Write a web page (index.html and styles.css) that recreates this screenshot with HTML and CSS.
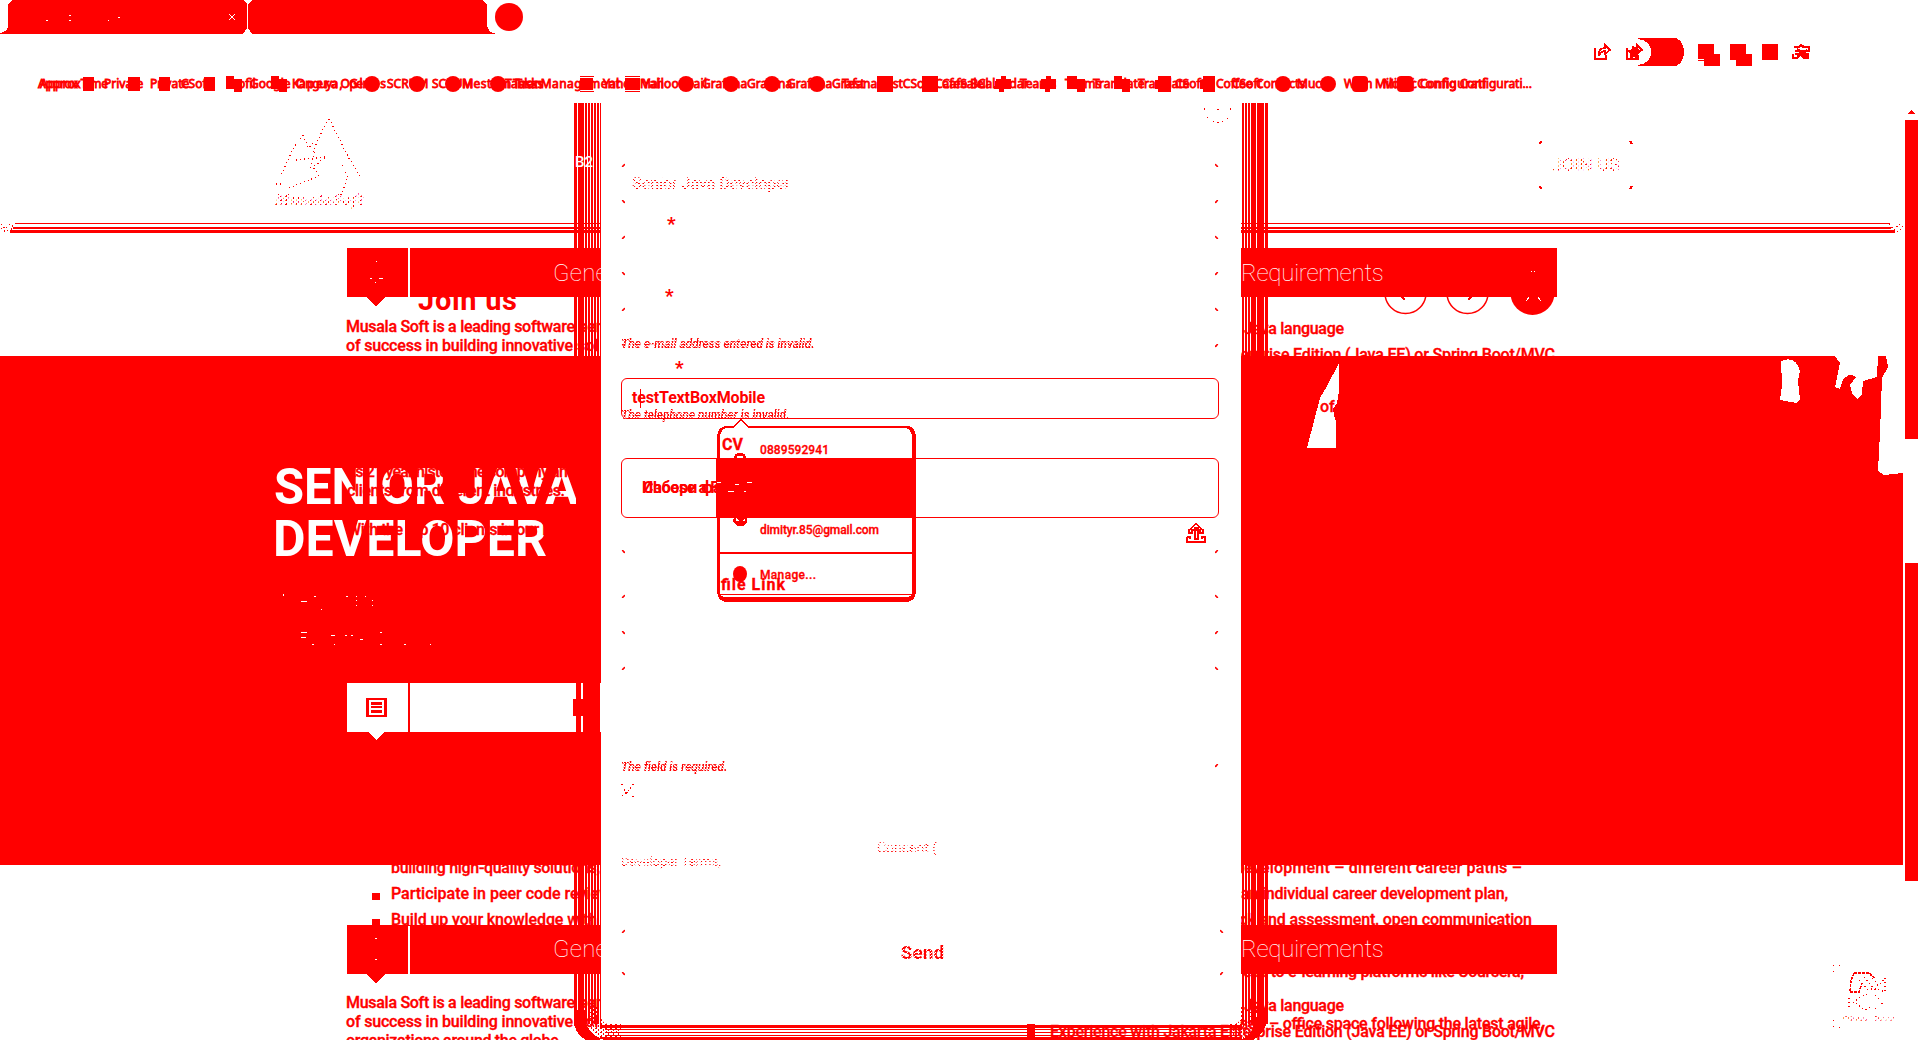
FILE: index.html
```html
<!DOCTYPE html>
<html lang="en">
<head>
<meta charset="utf-8">
<title>Senior Java Developer</title>
<link rel="stylesheet" href="styles.css">
</head>
<body>
<header class="chrome">
<svg width="1920" height="103" viewBox="0 0 1920 103">
  <path d="M12 0H244L247 4V28L243 34H0V33Q8 32 8 25V5ZM252 0H483L487 5V25Q488 33 495 33V34H252L248 28V4Z"/>
  <ellipse cx="509" cy="17" rx="14" ry="14"/>
  <path class="paper" d="M46 20h2v1h-2zM69 15h2v1h-2zM69 20h2v1h-2zM108 20h1v1h-1zM118 17h2v1h-2z"/>
  <path class="cross" d="M229 14l6 6M235 14l-6 6"/>
  <g class="tools">
    <path class="line" d="M1595 48v11h11v-4M1599 56v-4q1-4 6-4v-3l5 5-5 4v-3q-4 0-6 5"/>
    <path class="line" d="M1627 48v11h11v-4M1631 56v-4q1-4 6-4v-3l5 5-5 4v-3q-4 0-6 5"/>
    <path d="M1627 50l4 0 2-5 3 4 5 1-3 4 0 5-4-2-4 2v-5z"/>
    <path d="M1638 38h36a10 14 0 0 1 0 28h-36v-1q13-2 13-13t-13-13z"/>
    <path d="M1698 44h16v10h6v12h-16v-5h-6v-1h6v-1h-6zM1730 44h16v10h6v12h-16v-6h-6zM1762 44h16v16h-16z"/>
    <path class="line wide" d="M1794 47h5l2-2 3 2h5v4h-14m0 3h13v4h-4l-4-4-3 4h-4v-4M1797 49l10 8m0-7l-10 7"/>
  </g>
  <g class="icons">
    <path d="M83 77h11v14h-11zM128 77h12v14h-12zM159 77h11v14h-11zM204 77h11v14h-11zM226 76h8v3h8v13h-8v-3h-8zM271 76h8v3h8v13h-8v-3h-8zM580 78h13v12h-13zM580 76h14v1h-14zM580 91h14v1h-14zM625 78h15v12h-15zM625 76h15v1h-15zM625 91h15v1h-15zM877 76h16v16h-16zM922 76h16v16h-16zM996 79h5v-3h5v3h5v10h-7v3h-5v-3h-5zM1041 79h5v-3h5v3h5v10h-6v3h-5v-3h-5zM1067 76h10v3h8v13h-8v-3h-10zM1114 76h8v3h8v13h-8v-3h-8zM1158 76h13v16h-13v-3h-3v-9h3zM1203 76h12v16h-12v-3h-3v-9h3z"/>
    <circle cx="372" cy="84" r="8"/><circle cx="417" cy="84" r="8"/><circle cx="453" cy="84" r="8"/><circle cx="498" cy="84" r="8"/><circle cx="686" cy="84" r="8"/><circle cx="731" cy="84" r="8"/><circle cx="772" cy="84" r="8"/><circle cx="817" cy="84" r="8"/><circle cx="1283" cy="84" r="8"/><circle cx="1328" cy="84" r="8"/><rect x="1352" y="76" width="16" height="16" rx="4"/><rect x="1397" y="76" width="16" height="16" rx="4"/>
  </g>
  <g class="bookmarks">
    <text x="38" y="88" textLength="70">Approx Time</text><text x="40" y="88">Approx</text><text x="104" y="88">Private</text><text x="150" y="88">Private</text><text x="181" y="88">CSoft</text><text x="226" y="88">Profil</text><text x="250" y="88">Google</text><text x="292" y="88" textLength="78">Kanguya Open</text><text x="296" y="88" textLength="90">Opera, Glass</text><text x="387" y="88">SCRUM</text><text x="432" y="88">SCRUM</text><text x="462" y="88" textLength="80">Mestum Tran</text><text x="505" y="88" textLength="115">Tasks Management</text><text x="513" y="88">Tasks</text><text x="603" y="88">Yahoo</text><text x="640" y="88">Mail</text><text x="643" y="88" textLength="64">Yahoo Mail</text><text x="702" y="88">Grafana</text><text x="747" y="88">Grafana</text><text x="787" y="88">Grafana</text><text x="832" y="88">Grafana</text><text x="842" y="88">Test</text><text x="886" y="88">estCSoft</text><text x="935" y="88">CafeSale</text><text x="942" y="88">Cafe Bul</text><text x="978" y="88">Calendar</text><text x="1020" y="88">Teams</text><text x="1065" y="88">Teams</text><text x="1093" y="88">Translate</text><text x="1138" y="88">Translate</text><text x="1175" y="88">CSoft</text><text x="1216" y="88">Coffee</text><text x="1232" y="88">CSoft</text><text x="1256" y="88">Contacts</text><text x="1297" y="88">Muc</text><text x="1344" y="88">Wiim</text><text x="1375" y="88">Milo</text><text x="1383" y="88">Miboj</text><text x="1411" y="88" textLength="75">cConfigurati</text><text x="1420" y="88" textLength="112">Config Configurati...</text>
  </g>
</svg>
</header>

<main class="page">
<svg class="scene" viewBox="0 103 1920 937" width="1920" height="937">
  <defs>
    <pattern id="speck" width="5" height="4" patternUnits="userSpaceOnUse"><path d="M0 0h2v1h-2zM3 1h1v2h-1zM1 3h1v1h-1z"/></pattern>
    <pattern id="bars" width="3" height="8" x="585" patternUnits="userSpaceOnUse"><path d="M0 0h2v8h-2z"/></pattern>
    <pattern id="rows" width="8" height="3" y="1028" patternUnits="userSpaceOnUse"><path d="M0 1h8v1h-8z"/></pattern>
    <pattern id="white" width="4" height="4" patternUnits="userSpaceOnUse"><path class="paper" d="M0 0h3v2h-3zM2 2h2v2h-2z"/></pattern>
    <clipPath id="above"><path d="M0 297H1920V356H0z"/></clipPath>
    <clipPath id="below"><path d="M0 865H1920V925H0z"/></clipPath>
    <clipPath id="foot"><path d="M0 974H1920V1040H0z"/></clipPath>
  </defs>

  <!-- brand -->
  <path class="dots" d="M329 119l-7 12-7 16-5 24M329 119l8 15 9 19 14 24M303 135l-10 14-12 27M303 135l5 13 8-7M296 160l30-3-13 10 6 9M289 188l30-12M342 165l6 12-7 18M276 184l6 0"/>
  <text class="brand" x="275" y="205" textLength="88" fill="url(#speck)">MusalaSoft</text>

  <!-- header edge -->
  <path d="M15 223H1890v1H15zM13 227H1891v2H13zM10 230H1895v3H10z"/>
  <path class="dots" d="M1 224l4 5 5-5 4 3M1 228l5 4 7-4M1889 224l5 6 5-6 4 2-4 6-7-1"/>

  <!-- dialog shadow -->
  <path d="M574 103h3v921h-3zM578 103h6v921h-6zM1251 103h4v921h-4zM1258 103h6v921h-6zM1265 103h3v921h-3z"/>
  <path fill="url(#bars)" d="M585 103h16v921h-16zM1242 103h17v921h-17z"/>
  <path d="M574 1010v14q3 12 12 16h18q-16-6-19-20v-10zM1257 1010q0 22-16 30h12q15-8 15-28v-2zM600 1025h642v3H600zM600 1037h642v3H600z"/>
  <path fill="url(#rows)" d="M605 1028h637v9H605z"/>
  <path fill="url(#speck)" d="M585 1005h16q0 19 20 19v16h-16q-20-8-20-35zM1241 1005h16q0 20-10 35h-18v-16q12 0 12-19z"/>
  <text class="small-white" x="575" y="167">B2</text>

  <!-- introduction under the header -->
  <g clip-path="url(#above)">
    <text class="join" x="418" y="310" textLength="99">Join us</text>
    <text x="346" y="332" textLength="229">Musala Soft is a leading software</text><text x="579" y="332">ser</text>
    <text x="346" y="351" textLength="227">of success in building innovative</text><text x="577" y="351">sol</text>
    <text x="1244" y="334" textLength="100">Java language</text>
    <text x="1218" y="360" textLength="337">Enterprise Edition (Java EE) or Spring Boot/MVC</text>
    <circle class="line" cx="1405.500" cy="293" r="20.500"/><circle class="line" cx="1467.500" cy="293" r="20.500"/>
    <path class="line wide" d="M1397 292l8 8M1476 292l-8 8"/>
    <circle cx="1532.500" cy="293" r="22"/><path class="cross" d="M1526 301l4-5M1541 301l-4-5"/>
  </g>
  <path d="M347 248h254v49H386l-10 9-10-9h-19zM1241 248h316v49h-316z"/>
  <path class="paper" d="M408 248h2v49h-2zM376 261h1v1h-1zM370 278h2v1h-2zM379 278h4v1h-4zM375 282h1v1h-1zM1531 271h1v1h-1zM1534 271h1v1h-1z"/>
  <text class="bar-title" x="553" y="281">General</text><text class="bar-title" x="1241" y="281" textLength="143">Requirements</text>

  <!-- hero -->
  <path d="M0 356h601v509H0zM1241 356h662v509h-662z"/>
  <path class="paper" d="M1339 363v28l-2 12-4 6 1 6 2 7v26h-29l13-50 7-12zM1781 361q15-6 19 10l-2 10 2 18-3 4-17-3 2-15zM1835 356l5 7-2 10-3 14 5 2 3-9q6-8 13-3l-6 8 2 8 5 6 5-5 1-13 14-4 1-21zM1886 356l2 11-6 11-2 55-2 38 6 4 19-2V356z"/>
  <text class="hero" x="274" y="504" textLength="304" lengthAdjust="spacingAndGlyphs">SENIOR JAVA</text>
  <text class="hero" x="273" y="556" textLength="274" lengthAdjust="spacingAndGlyphs">DEVELOPER</text>
  <path d="M576 470h25v36h-25z"/>
  <text x="347" y="477" textLength="229">Its 21 year history, the company and</text>
  <text x="347" y="496" textLength="218">clients from different industries.</text>
  <text x="347" y="535" textLength="225">With the top 10 clients in our long</text>
  <text x="1320" y="412">of</text>
  <path class="paper" d="M283 594h1v2h-1zM301 601h6v1h-6zM314 596h2v1h-2zM321 609h1v1h-1zM346 596h2v1h-2zM356 596h1v1h-1zM365 596h1v1h-1zM356 600h1v1h-1zM356 605h1v1h-1zM372 600h1v1h-1zM372 605h1v1h-1zM301 632h6v1h-6zM301 637h5v1h-5zM331 635h4v1h-4zM345 635h2v1h-2zM351 635h2v1h-2zM380 632h2v1h-2zM360 639h3v1h-3zM312 644h2v1h-2zM334 644h1v1h-1zM380 644h2v1h-2zM404 644h2v1h-2zM430 644h1v1h-1z"/>
  <path class="paper" d="M347 683h254v49H384l-8 8-8-8h-21z"/>
  <path d="M408 683h2v49h-2zM576 683h5v49h-5zM583 683h17v49h-17zM573 699h10v17h-10zM366 698h21v19h-21z"/>
  <path class="paper" d="M369 700h15v15h-15z"/><path d="M371 702h11v3h-11zM371 706h11v2h-11zM371 710h11v3h-11z"/>

  <!-- content between panels -->
  <g clip-path="url(#below)">
    <text x="391" y="873" textLength="209">building high-quality solutions,</text>
    <text x="391" y="899" textLength="220">Participate in peer code review</text>
    <text x="391" y="925" textLength="206">Build up your knowledge with</text>
    <path d="M372 893h8v7h-8zM372 919h8v6h-8z"/>
    <text x="1235" y="873" textLength="287">development – different career paths –</text>
    <text x="1241" y="899" textLength="267">an individual career development plan,</text>
    <text x="1239" y="925" textLength="293">ck and assessment, open communication</text>
  </g>
  <path d="M347 925h254v49H386l-10 9-10-9h-19zM1241 925h316v49h-316z"/>
  <path class="paper" d="M408 926h2v48h-2zM375 938h2v1h-2zM375 959h2v1h-2z"/>
  <text class="bar-title" x="553" y="957">General</text><text class="bar-title" x="1241" y="957" textLength="143">Requirements</text>
  <g clip-path="url(#foot)">
    <text x="1243" y="977" textLength="281">ess to e-learning platforms like Coursera,</text>
    <text x="346" y="1008" textLength="229">Musala Soft is a leading software</text><text x="579" y="1008">ser</text>
    <text x="346" y="1027" textLength="227">of success in building innovative</text><text x="577" y="1027">sol</text>
    <text x="346" y="1046" textLength="217">organizations around the globe.</text>
    <text x="1244" y="1011" textLength="100">Java language</text>
    <text x="1240" y="1029" textLength="304">sed – office space following the latest agile,</text>
    <text x="1050" y="1037" textLength="505">Experience with Jakarta Enterprise Edition (Java EE) or Spring Boot/MVC</text>
    <path d="M1027 1024h8v16h-8z"/>
  </g>

  <!-- join button, scrollbar and privacy badge -->
  <path class="corner" d="M1539.500 144l2-3M1632 144l-2-3M1539.500 186l2 3M1632 186l-2 3"/>
  <text class="button-text" x="1552" y="171" textLength="68" fill="url(#speck)">JOIN US</text>
  <path d="M1911 110l4 4h-7zM1905 120h13v319h-13zM1905 563h13v318h-13z"/>
  <path class="line" stroke-dasharray="3 1" d="M1854 973h16l5 6M1854 973l-3 8-1 11h9l3-9"/>
  <path class="dots" d="M1862 983l6 7 8-2 9 4V978l-6 7M1864 977l12 14M1859 980l8 8M1870 975l9 12M1849 998v12M1853 1003l6-5 8-4M1856 1003l9 7 8-4M1875 995l8 8-8 6"/>
  <path d="M1833 965h1v1h-1zM1839 965h1v1h-1zM1833 971h1v1h-1zM1833 1020h1v1h-1zM1833 1026h1v1h-1zM1839 1027h1v1h-1z"/>
  <text class="privacy" x="1843" y="1021" textLength="52" fill="url(#speck)">Privacy · Terms</text>
</svg>

<form class="dialog">
  <svg class="close" width="28" height="16" viewBox="0 0 28 16"><path d="M1 1v2M14 2h2M27 1v2M4 10l1 1M10 14h1M14 15h2M19 14h1M24 11h1"/></svg>
  <div class="field first"><span class="value speckled">Senior Java Developer</span></div>
  <div class="mark">*</div>
  <div class="field"></div>
  <div class="mark second">*</div>
  <div class="field"><em class="error">The e-mail address entered is invalid.</em></div>
  <div class="mark third">*</div>
  <div class="field phone"><span class="value">testTextBoxMobile</span><i class="caret"></i><em class="error">The telephone number is invalid.</em></div>
  <div class="field upload"><span class="file">Избери файл</span><span class="file over">Choose a File...</span></div>
  <div class="field tail">
    <svg class="send-icon" width="20" height="20" viewBox="0 0 20 20"><path d="M10 1L3 7v3h3V7h8v3h3V7zM1 14v5h18v-5h-3v2M1 14h3v2M9 5h3v11H9z"/></svg>
  </div>
  <div class="field link"></div>
  <div class="field message"><em class="error">The field is required.</em></div>
  <div class="check"><svg width="14" height="14" viewBox="0 0 14 14"><path d="M0 1h2M11 1h2M1 12h1M11 13h2M3 6l2 5 5-7"/></svg></div>
  <div class="consent speckled">Consent (</div>
  <div class="terms speckled">Developer Terms,</div>
  <div class="field submit"><span class="speckled">Send</span></div>
</form>

<svg class="popup" width="200" height="184" viewBox="716 419 200 184">
  <path d="M727 426h6l8-7 8 7h158q8 0 9 10v156q-1 10-10 10H727q-9 0-10-10V436q1-10 10-10z"/>
  <path class="paper" d="M728 428h6l7-8 7 8h156q8 0 8 10v154q0 5-6 5H726q-6 0-6-6V438q0-10 8-10z"/>
  <path d="M716 458h200v60H716zM719 552h194v2H719zM719 594h194v1H719z"/>
  <path class="paper" d="M717 482h4v1h-4zM728 491h6v1h-6zM735 484h4v1h-4zM747 482h5v1h-5zM744 491h2v1h-2z"/>
  <path d="M734 458q0-5 6-5t6 5zM734 518h13v4l-4 4h-6l-4-5z"/>
  <path class="paper" d="M737 456h6v2h-6zM736 518l3 3h-3zM745 518l-3 3h3z"/>
  <ellipse cx="740" cy="574" rx="7" ry="8"/>
  <text class="strong" x="722" y="450">CV</text><text class="strong" x="721" y="590" textLength="64">file Link</text>
  <text x="760" y="454" textLength="69">0889592941</text><text x="760" y="534" textLength="119">dimityr.85@gmail.com</text><text x="760" y="579" textLength="56">Manage...</text>
</svg>
</main>
</body>
</html>
```
FILE: styles.css
```css
* { box-sizing: border-box; }
body { margin: 0; width: 1920px; height: 1040px; overflow: hidden; background: #fff; color: #f00; font-family: Roboto, sans-serif; font-size: 16px; }
svg { display: block; fill: #f00; }
.chrome { height: 103px; }
.page { position: relative; height: 937px; }
path { shape-rendering: crispEdges; }
.paper { fill: #fff; }
.line { fill: none; stroke: #f00; stroke-width: 1.5; }
.wide { stroke-width: 2.5; }
.cross { fill: none; stroke: #fff; stroke-width: 1; }
.dots { fill: none; stroke: #f00; stroke-width: 1.3; stroke-dasharray: 1 3; }
.corner { fill: none; stroke: #f00; stroke-width: 2; }
.bookmarks { font: 12px "Noto Sans", sans-serif; stroke: #f00; stroke-width: .8; }
.scene { font: 500 16px Roboto, sans-serif; }
.scene text:not([class]) { stroke: #f00; stroke-width: .35; }
.brand { font: italic 700 17px "Liberation Serif", serif; }
.join { font: 700 29px Roboto, sans-serif; }
.hero { font: 700 50.6px Roboto, sans-serif; fill: #fff; }
.bar-title { font: 100 24px Roboto, sans-serif; fill: #fff; letter-spacing: .3px; }
.small-white { font: 500 15px Roboto, sans-serif; fill: #fff; }
.button-text { font: 400 18px Roboto, sans-serif; }
.privacy { font: 8px Roboto, sans-serif; }

.dialog { position: absolute; left: 601px; top: 0; width: 640px; height: 921px; padding: 60px 22px 0 20px; background: #fff; border-radius: 0 0 8px 8px; }
.close { position: absolute; left: 602px; top: 4px; }
.close path, .check path, .send-icon path { fill: none; stroke: #f00; stroke-width: 1; }
.check path { stroke-dasharray: 2 1; }
.send-icon path { stroke-width: 1.5; }
.field { position: relative; height: 41px; display: flex; align-items: center; padding-left: 11px; }
.field::before { content: ""; position: absolute; inset: 0; border: 2px solid #f00; border-radius: 6px; mask: linear-gradient(#000 0 0) 0 0 / 4px 4px, linear-gradient(#000 0 0) 100% 0 / 4px 4px, linear-gradient(#000 0 0) 0 100% / 4px 4px, linear-gradient(#000 0 0) 100% 100% / 4px 4px; mask-repeat: no-repeat; }
.phone::before, .upload::before { border-width: 1px; mask: none; }
.mark { height: 31px; padding: 8px 0 0 46px; font: 700 19px/24px Roboto, sans-serif; }
.second { padding-left: 44px; }
.third { height: 30px; padding-left: 54px; }
.value { font-weight: 700; letter-spacing: -.15px; margin-top: -2px; }
.first .value { font-weight: 500; letter-spacing: -.05px; margin-top: 0; }
.speckled { color: transparent; background: repeating-conic-gradient(#f00 0 25%, #fff 0 50%) 0 0 / 4px 3px; background-clip: text; }
.error { position: absolute; left: 0; bottom: -3px; font: italic 700 12px/14px Roboto, sans-serif; letter-spacing: -.08px; color: transparent; background: repeating-conic-gradient(#f00 0 33%, #fff 0 50%) 0 0 / 3px 3px; background-clip: text; }
.field.phone { height: 41px; }
.caret { position: absolute; left: 19px; top: 11px; width: 1px; height: 19px; background: #f00; }
.upload { height: 60px; margin-top: 39px; padding-left: 21px; }
.file { font-weight: 700; margin-top: -2px; }
.over { position: absolute; left: 22px; letter-spacing: -.4px; }
.tail { height: 36px; }
.tail::before { mask: linear-gradient(#000 0 0) 0 100% / 4px 4px, linear-gradient(#000 0 0) 100% 100% / 4px 4px; mask-repeat: no-repeat; }
.send-icon { margin: -7px 0 0 554px; }
.link { margin-top: 40px; }
.message { height: 102px; margin-top: 31px; }
.message::before { mask: linear-gradient(#000 0 0) 0 0 / 4px 4px, linear-gradient(#000 0 0) 100% 0 / 4px 4px, linear-gradient(#000 0 0) 100% 100% / 4px 4px; mask-repeat: no-repeat; }
.message .error { bottom: -6px; }
.check { margin-top: 15px; height: 14px; }
.consent { margin: 42px 0 0 256px; width: 70px; font-size: 14px; line-height: 18px; white-space: nowrap; }
.terms { width: 110px; margin-top: -4px; font-size: 13px; line-height: 18px; }
.submit { margin-top: 58px; width: 603px; height: 47px; padding: 0; justify-content: center; font: 700 19px Roboto, sans-serif; }
.submit .speckled { background-image: repeating-conic-gradient(#f00 0 40%, #fff 0 50%); }
.popup { position: absolute; left: 716px; top: 316px; font: 500 12px Roboto, sans-serif; }
.popup text { stroke: #f00; stroke-width: .3; }
.popup .strong { font: 700 16px Roboto, sans-serif; }
```
